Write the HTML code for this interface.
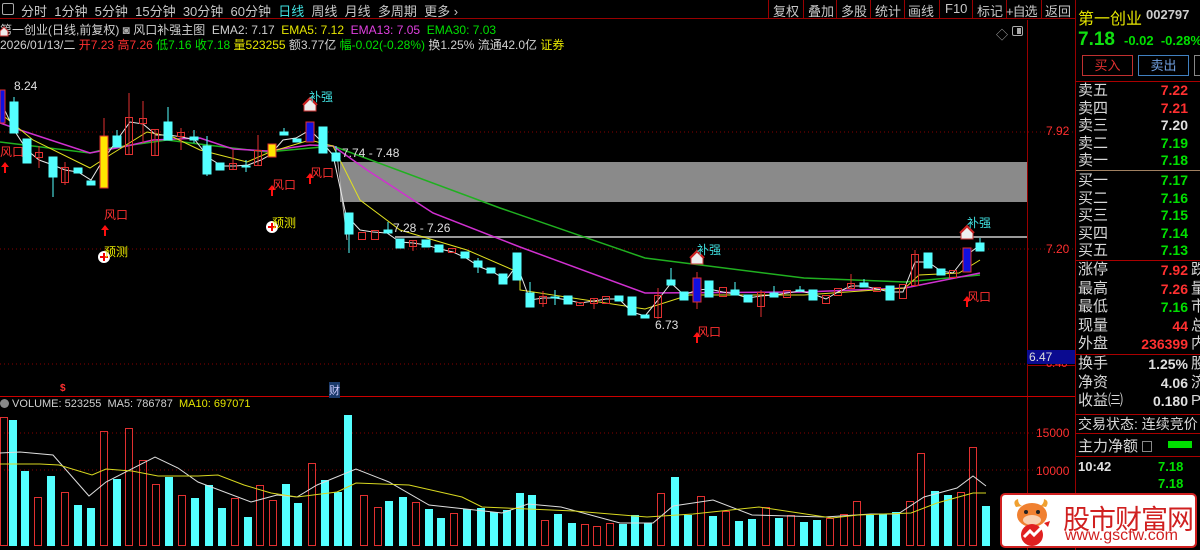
<!DOCTYPE html>
<html><head><meta charset="utf-8">
<style>
*{margin:0;padding:0;box-sizing:border-box}
body{width:1200px;height:550px;background:#000;overflow:hidden;position:relative;font-family:"Liberation Sans","Noto Sans CJK SC",sans-serif;color:#c0c0c0}
.a{position:absolute;white-space:nowrap}
.tb{font-size:13px;color:#c8c8c8;top:1px}
.r{color:#ff3030}.g{color:#00e000}.y{color:#e6e600}.m{color:#e040e0}.w{color:#e0e0e0}.c{color:#40e0e0}
.rp{font-size:15px;color:#d8d8d8}
.v{font-size:14px;font-weight:bold;text-align:right;width:60px}
.sep{position:absolute;top:0;width:1px;height:19px;background:#900}
</style></head><body>
<!-- toolbar -->
<div class="a" style="left:0;top:0;width:1075px;height:19px;border-bottom:1px solid #900"></div>
<div class="a" style="left:2px;top:3px;width:12px;height:12px;border:1px solid #aaa;border-radius:2px"></div>
<div class="a tb" style="left:21px">分时&nbsp;&nbsp;1分钟&nbsp;&nbsp;5分钟&nbsp;&nbsp;15分钟&nbsp;&nbsp;30分钟&nbsp;&nbsp;60分钟&nbsp;&nbsp;<span class="c">日线</span>&nbsp;&nbsp;周线&nbsp;&nbsp;月线&nbsp;&nbsp;多周期&nbsp;&nbsp;更多 ›</div>
<div class="sep" style="left:768px"></div><div class="sep" style="left:803px"></div><div class="sep" style="left:836px"></div><div class="sep" style="left:870px"></div><div class="sep" style="left:904px"></div><div class="sep" style="left:939px"></div><div class="sep" style="left:972px"></div><div class="sep" style="left:1006px"></div><div class="sep" style="left:1041px"></div>
<div class="a tb" style="left:773px">复权</div><div class="a tb" style="left:808px">叠加</div><div class="a tb" style="left:841px">多股</div><div class="a tb" style="left:875px">统计</div><div class="a tb" style="left:908px">画线</div><div class="a tb" style="left:945px">F10</div><div class="a tb" style="left:977px">标记</div><div class="a tb" style="left:1006px;letter-spacing:-1px">+自选</div><div class="a tb" style="left:1045px">返回</div>
<div class="a" style="left:996px;top:26px;color:#aaa;font-size:12px">◇</div>
<div class="a" style="left:1012px;top:26px;width:11px;height:10px;border:1px solid #aaa;border-radius:2px"><div style="position:absolute;right:1px;top:1px;width:4px;height:6px;background:#aaa"></div></div>
<!-- headers -->
<div class="a" style="left:0;top:21px;font-size:12px;color:#d0d0d0">第一创业(日线,前复权) <span style="color:#aaa">◙</span> 风口补强主图&nbsp; EMA2: 7.17&nbsp; <span class="y">EMA5: 7.12</span>&nbsp; <span class="m">EMA13: 7.05</span>&nbsp; <span class="g">EMA30: 7.03</span></div>
<div class="a" style="left:0;top:36px;font-size:12px;color:#d0d0d0">2026/01/13/二 <span class="r">开7.23</span> <span class="r">高7.26</span> <span class="g">低7.16</span> <span class="g">收7.18</span> <span class="y">量523255</span> 额3.77亿 <span class="g">幅-0.02(-0.28%)</span> 换1.25% 流通42.0亿 <span class="y">证券</span></div>
<!-- frame lines -->
<div class="a" style="left:1027px;top:20px;width:1px;height:530px;background:#900"></div>
<div class="a" style="left:1075px;top:0;width:1px;height:550px;background:#900"></div>
<div class="a" style="left:0;top:396px;width:1075px;height:1px;background:#c00"></div>
<div class="a" style="left:1027px;top:365px;width:48px;height:1px;background:#900"></div>
<!-- axis labels -->
<div class="a r" style="left:1046px;top:124px;font-size:12px">7.92</div>
<div class="a r" style="left:1046px;top:242px;font-size:12px">7.20</div>
<div class="a r" style="left:1046px;top:358px;font-size:11px">6.40</div>
<div class="a" style="left:1027px;top:350px;width:48px;height:14px;background:#0a0a90;color:#ddd;font-size:12px;padding-left:2px;line-height:14px">6.47</div>
<div class="a r" style="left:1036px;top:426px;font-size:12px">15000</div>
<div class="a r" style="left:1036px;top:464px;font-size:12px">10000</div>
<div class="a" style="left:0;top:398px;font-size:11px;color:#d0d0d0"><span style="display:inline-block;width:9px;height:9px;border-radius:50%;background:#888;vertical-align:-1px"></span> VOLUME: 523255&nbsp; MA5: 786787&nbsp; <span class="y">MA10: 697071</span></div>
<div class="a r" style="left:60px;top:383px;font-size:10px;font-weight:bold">$</div>
<div class="a" style="left:329px;top:382px;font-size:11px;background:#1a3a6a;color:#ccf">财</div>
<svg class="a" style="left:0;top:0" width="1075" height="550">
<g stroke="#800" stroke-dasharray="1,3" stroke-width="1">
<line x1="0" y1="132" x2="1075" y2="132"/><line x1="0" y1="249" x2="1075" y2="249"/><line x1="0" y1="364" x2="1027" y2="364"/>
<line x1="0" y1="433" x2="1040" y2="433"/><line x1="0" y1="470" x2="1040" y2="470"/>
</g>
<rect x="340" y="162" width="687" height="40" fill="#8a8a8a"/>
<rect x="395" y="236" width="632" height="2" fill="#999"/>
<line x1="337" y1="155" x2="347" y2="240" stroke="#aaa"/>
<polyline fill="none" stroke="#20b020" stroke-width="1.5" points="0,142 90,153 110,148 167,140 207,145 267,152 333,146 500,208 645,258 804,278 905,282 980,275"/>
<polyline fill="none" stroke="#d030d0" stroke-width="1.5" points="0,123 20,130 90,153 127,146 153,140 200,138 233,149 267,151 310,145 333,146 367,170 433,213 520,247 645,293 804,292 905,288 980,273"/>
<polyline fill="none" stroke="#e0e020" stroke-width="1" points="0,113 33,140 90,168 110,155 147,132 173,137 200,150 247,162 270,152 310,140 333,146 360,200 400,230 467,250 520,273 520,290 645,309 689,295 804,295 905,288 919,275 959,273 980,260"/>
<polyline fill="none" stroke="#e8e8e8" stroke-width="1" points="0,100 14,130 27,150 39,160 53,165 65,170 78,172 91,180 100,165 117,140 130,122 143,124 156,135 169,135 182,137 195,140 209,158 222,166 235,166 248,165 261,160 270,155 283,140 296,138 310,130 320,140 333,155 346,215 360,230 373,232 387,233 400,242 413,243 426,245 440,249 453,252 466,258 480,267 493,272 506,280 517,265 530,300 543,298 555,298 568,300 580,303 594,301 606,299 619,299 632,312 645,316 658,300 671,283 684,295 697,290 709,289 723,292 735,294 748,298 761,296 774,295 787,293 800,291 813,294 826,299 838,292 851,286 864,286 877,289 890,292 903,292 915,262 928,262 941,271 953,273 967,255 980,245"/>
<g fill="#54ffff" stroke="#54ffff">
<line x1="14" y1="97" x2="14" y2="133"/><rect x="10" y="102" width="8" height="31"/>
<rect x="23" y="139" width="8" height="24"/>
<line x1="53" y1="157" x2="53" y2="197"/><rect x="49" y="157" width="8" height="20"/>
<rect x="74" y="168" width="8" height="5"/><rect x="87" y="181" width="8" height="4"/>
<line x1="117" y1="130" x2="117" y2="147"/><rect x="113" y="136" width="8" height="11"/>
<line x1="168" y1="107" x2="168" y2="140"/><rect x="164" y="122" width="8" height="18"/>
<line x1="194" y1="130" x2="194" y2="143"/><rect x="190" y="137" width="8" height="3"/>
<line x1="207" y1="136" x2="207" y2="176"/><rect x="203" y="146" width="8" height="28"/>
<rect x="216" y="163" width="8" height="7"/><line x1="246" y1="160" x2="246" y2="172"/><rect x="242" y="166" width="8" height="1"/>
<line x1="284" y1="128" x2="284" y2="135"/><rect x="280" y="132" width="8" height="3"/><rect x="293" y="139" width="8" height="3"/>
<rect x="319" y="127" width="8" height="26"/><line x1="336" y1="146" x2="336" y2="161"/><rect x="332" y="153" width="8" height="8"/>
<line x1="349" y1="213" x2="349" y2="253"/><rect x="345" y="213" width="8" height="21"/>
<line x1="388" y1="222" x2="388" y2="233"/><rect x="384" y="230" width="8" height="3"/>
<rect x="396" y="239" width="8" height="9"/><rect x="422" y="240" width="8" height="7"/><rect x="435" y="245" width="8" height="7"/>
<rect x="461" y="252" width="8" height="6"/><line x1="478" y1="258" x2="478" y2="273"/><rect x="474" y="261" width="8" height="6"/><rect x="487" y="268" width="8" height="5"/>
<rect x="499" y="274" width="8" height="10"/><rect x="513" y="253" width="8" height="27"/>
<line x1="530" y1="282" x2="530" y2="307"/><rect x="526" y="293" width="8" height="14"/>
<line x1="555" y1="290" x2="555" y2="305"/><rect x="551" y="297" width="8" height="1"/><rect x="564" y="296" width="8" height="8"/>
<rect x="615" y="296" width="8" height="5"/><rect x="628" y="297" width="8" height="18"/><rect x="641" y="315" width="8" height="3"/>
<line x1="671" y1="268" x2="671" y2="285"/><rect x="667" y="280" width="8" height="5"/><rect x="680" y="292" width="8" height="8"/>
<rect x="705" y="281" width="8" height="16"/><line x1="735" y1="282" x2="735" y2="295"/><rect x="731" y="290" width="8" height="5"/>
<rect x="744" y="295" width="8" height="7"/><line x1="774" y1="286" x2="774" y2="297"/><rect x="770" y="293" width="8" height="4"/>
<line x1="800" y1="286" x2="800" y2="292"/><rect x="796" y="290" width="8" height="1"/><rect x="809" y="290" width="8" height="10"/>
<line x1="864" y1="279" x2="864" y2="287"/><rect x="860" y="283" width="8" height="4"/><rect x="886" y="286" width="8" height="14"/>
<rect x="924" y="253" width="8" height="15"/><rect x="937" y="269" width="8" height="6"/>
<line x1="980" y1="238" x2="980" y2="251"/><rect x="976" y="243" width="8" height="8"/>
</g>
<g fill="none" stroke="#e03030">
<line x1="39" y1="146" x2="39" y2="168"/><rect x="35.5" y="152.5" width="7" height="5"/>
<line x1="65" y1="162" x2="65" y2="185"/><rect x="61.5" y="167.5" width="7" height="15"/>
<line x1="129" y1="93" x2="129" y2="155"/><rect x="125.5" y="117.5" width="7" height="37"/>
<line x1="143" y1="101" x2="143" y2="143"/><rect x="139.5" y="118.5" width="7" height="5"/>
<line x1="155" y1="129" x2="155" y2="156"/><rect x="151.5" y="129.5" width="7" height="26"/>
<line x1="181" y1="128" x2="181" y2="150"/><rect x="177.5" y="132.5" width="7" height="4"/>
<line x1="233" y1="150" x2="233" y2="170"/><rect x="229.5" y="163.5" width="7" height="6"/>
<line x1="258" y1="135" x2="258" y2="165"/><rect x="254.5" y="150.5" width="7" height="15"/>
<rect x="358.5" y="232.5" width="7" height="7"/><rect x="371.5" y="230.5" width="7" height="9"/>
<line x1="413" y1="240" x2="413" y2="251"/><rect x="409.5" y="240.5" width="7" height="6"/>
<rect x="448.5" y="248.5" width="7" height="4"/>
<line x1="543" y1="291" x2="543" y2="307"/><rect x="539.5" y="296.5" width="7" height="7"/>
<rect x="576.5" y="302.5" width="7" height="3"/><line x1="594" y1="298" x2="594" y2="309"/><rect x="590.5" y="298.5" width="7" height="5"/>
<rect x="602.5" y="296.5" width="7" height="7"/>
<line x1="658" y1="288" x2="658" y2="319"/><rect x="654.5" y="295.5" width="7" height="22"/>
<rect x="719.5" y="287.5" width="7" height="9"/><line x1="761" y1="290" x2="761" y2="317"/><rect x="757.5" y="292.5" width="7" height="14"/>
<rect x="783.5" y="290.5" width="7" height="7"/><rect x="822.5" y="295.5" width="7" height="8"/><rect x="834.5" y="288.5" width="7" height="7"/>
<line x1="851" y1="274" x2="851" y2="288"/><rect x="847.5" y="283.5" width="7" height="5"/><rect x="873.5" y="287.5" width="7" height="4"/>
<rect x="899.5" y="284.5" width="7" height="14"/><line x1="915" y1="250" x2="915" y2="285"/><rect x="911.5" y="254.5" width="7" height="31"/>
<rect x="949.5" y="270.5" width="7" height="7"/>
</g>
<rect x="100" y="136" width="8" height="52" fill="#ffe600" stroke="#e03030"/><line x1="104" y1="118" x2="104" y2="136" stroke="#e03030"/>
<rect x="268" y="144" width="8" height="13" fill="#ffe600" stroke="#e03030"/>
<rect x="0" y="90" width="5" height="33" fill="#1010e0" stroke="#e03030"/>
<rect x="306" y="122" width="8" height="20" fill="#1010e0" stroke="#e03030"/>
<line x1="697" y1="272" x2="697" y2="309" stroke="#e03030"/><rect x="693" y="278" width="8" height="24" fill="#1010e0" stroke="#e03030"/>
<rect x="963" y="248" width="8" height="24" fill="#1010e0" stroke="#e03030"/>
<g fill="#ff1010">
<path d="M5 162 l-4 5 h3 v6 h2 v-6 h3z"/><path d="M105 225 l-4 5 h3 v6 h2 v-6 h3z"/>
<path d="M272 185 l-4 5 h3 v6 h2 v-6 h3z"/><path d="M310 173 l-4 5 h3 v6 h2 v-6 h3z"/>
<path d="M697 332 l-4 5 h3 v6 h2 v-6 h3z"/><path d="M967 296 l-4 5 h3 v6 h2 v-6 h3z"/>
</g>
<g><circle cx="104" cy="257" r="6" fill="#fff"/><path d="M104 253v8M100 257h8" stroke="#e00" stroke-width="2"/>
<circle cx="272" cy="227" r="6" fill="#fff"/><path d="M272 223v8M268 227h8" stroke="#e00" stroke-width="2"/></g>
<g><path d="M304 105 l6-6 6 6 v6 h-12z" fill="#eee" stroke="#c33"/><path d="M303 105 l7-7 7 7" fill="none" stroke="#c22" stroke-width="2"/>
<path d="M691 258 l6-6 6 6 v6 h-12z" fill="#eee" stroke="#c33"/><path d="M690 258 l7-7 7 7" fill="none" stroke="#c22" stroke-width="2"/>
<path d="M961 233 l6-6 6 6 v6 h-12z" fill="#eee" stroke="#c33"/><path d="M960 233 l7-7 7 7" fill="none" stroke="#c22" stroke-width="2"/>
<path d="M0 31 l4-4 4 4 v5 h-8z" fill="#eee" stroke="#c33"/></g>
<g fill="#54ffff">
<rect x="9" y="420" width="8" height="126"/><rect x="21" y="471" width="8" height="75"/><rect x="47" y="476" width="8" height="70"/><rect x="74" y="505" width="8" height="41"/><rect x="87" y="508" width="8" height="38"/><rect x="113" y="479" width="8" height="67"/><rect x="165" y="477" width="8" height="69"/><rect x="191" y="498" width="8" height="48"/><rect x="205" y="485" width="8" height="61"/><rect x="218" y="508" width="8" height="38"/><rect x="244" y="517" width="8" height="29"/><rect x="282" y="484" width="8" height="62"/><rect x="294" y="503" width="8" height="43"/><rect x="321" y="480" width="8" height="66"/><rect x="334" y="492" width="8" height="54"/><rect x="344" y="415" width="8" height="131"/><rect x="385" y="501" width="8" height="45"/><rect x="399" y="497" width="8" height="49"/><rect x="425" y="509" width="8" height="37"/><rect x="437" y="518" width="8" height="28"/><rect x="463" y="509" width="8" height="37"/><rect x="477" y="508" width="8" height="38"/><rect x="490" y="512" width="8" height="34"/><rect x="503" y="510" width="8" height="36"/><rect x="516" y="493" width="8" height="53"/><rect x="528" y="495" width="8" height="51"/><rect x="554" y="514" width="8" height="32"/><rect x="568" y="523" width="8" height="23"/><rect x="619" y="524" width="8" height="22"/><rect x="631" y="515" width="8" height="31"/><rect x="644" y="523" width="8" height="23"/><rect x="671" y="477" width="8" height="69"/><rect x="684" y="515" width="8" height="31"/><rect x="709" y="516" width="8" height="30"/><rect x="735" y="521" width="8" height="25"/><rect x="748" y="519" width="8" height="27"/><rect x="775" y="518" width="8" height="28"/><rect x="800" y="522" width="8" height="24"/><rect x="813" y="520" width="8" height="26"/><rect x="866" y="515" width="8" height="31"/><rect x="879" y="514" width="8" height="32"/><rect x="892" y="512" width="8" height="34"/><rect x="931" y="491" width="8" height="55"/><rect x="944" y="495" width="8" height="51"/><rect x="982" y="506" width="8" height="40"/>
</g>
<g fill="none" stroke="#e03030">
<rect x="0.5" y="417.5" width="7" height="128"/><rect x="34.5" y="497.5" width="7" height="48"/><rect x="61.5" y="492.5" width="7" height="53"/><rect x="100.5" y="431.5" width="7" height="114"/><rect x="125.5" y="428.5" width="7" height="117"/><rect x="139.5" y="460.5" width="7" height="85"/><rect x="152.5" y="484.5" width="7" height="61"/><rect x="178.5" y="495.5" width="7" height="50"/><rect x="231.5" y="498.5" width="7" height="47"/><rect x="256.5" y="485.5" width="7" height="60"/><rect x="269.5" y="500.5" width="7" height="45"/><rect x="308.5" y="463.5" width="7" height="82"/><rect x="360.5" y="495.5" width="7" height="50"/><rect x="374.5" y="507.5" width="7" height="38"/><rect x="412.5" y="502.5" width="7" height="43"/><rect x="450.5" y="513.5" width="7" height="32"/><rect x="541.5" y="520.5" width="7" height="25"/><rect x="581.5" y="524.5" width="7" height="21"/><rect x="593.5" y="526.5" width="7" height="19"/><rect x="606.5" y="523.5" width="7" height="22"/><rect x="657.5" y="493.5" width="7" height="52"/><rect x="697.5" y="496.5" width="7" height="49"/><rect x="722.5" y="511.5" width="7" height="34"/><rect x="762.5" y="507.5" width="7" height="38"/><rect x="787.5" y="515.5" width="7" height="30"/><rect x="826.5" y="518.5" width="7" height="27"/><rect x="840.5" y="514.5" width="7" height="31"/><rect x="853.5" y="501.5" width="7" height="44"/><rect x="906.5" y="501.5" width="7" height="44"/><rect x="917.5" y="453.5" width="7" height="92"/><rect x="957.5" y="492.5" width="7" height="53"/><rect x="969.5" y="447.5" width="7" height="98"/>
</g>
<polyline fill="none" stroke="#ddd" points="0,453 20,452 53,455 89,496 106,482 155,457 178,468 198,482 251,502 277,495 297,497 317,485 356,469 389,482 429,505 502,513 528,504 561,507 620,523 653,523 673,506 713,500 752,515 825,517 871,514 898,514 924,497 957,488 973,476 986,486"/>
<polyline fill="none" stroke="#d8d820" points="0,464 40,464 59,465 92,475 106,469 132,471 158,476 198,476 218,475 244,485 271,493 297,497 337,492 356,483 409,485 462,497 482,507 574,511 647,517 693,514 759,507 799,513 832,518 858,515 911,513 937,503 973,493 986,493"/>
</svg>
<div class="a w" style="left:14px;top:79px;font-size:12px">8.24</div>
<div class="a w" style="left:655px;top:318px;font-size:12px">6.73</div>
<div class="a w" style="left:342px;top:146px;font-size:12px">7.74 - 7.48</div>
<div class="a w" style="left:393px;top:221px;font-size:12px">7.28 - 7.26</div>
<div class="a r" style="left:0;top:143px;font-size:12px">风口</div>
<div class="a r" style="left:104px;top:206px;font-size:12px">风口</div>
<div class="a y" style="left:104px;top:243px;font-size:12px">预测</div>
<div class="a r" style="left:272px;top:176px;font-size:12px">风口</div>
<div class="a y" style="left:272px;top:214px;font-size:12px">预测</div>
<div class="a r" style="left:310px;top:164px;font-size:12px">风口</div>
<div class="a c" style="left:309px;top:88px;font-size:12px">补强</div>
<div class="a c" style="left:697px;top:241px;font-size:12px">补强</div>
<div class="a r" style="left:697px;top:323px;font-size:12px">风口</div>
<div class="a c" style="left:967px;top:214px;font-size:12px">补强</div>
<div class="a r" style="left:967px;top:288px;font-size:12px">风口</div>
<!-- right panel -->
<div class="a" style="left:1078px;top:5px;font-size:16px;color:#e6e600">第一创业</div>
<div class="a" style="left:1146px;top:7px;font-size:13px;font-weight:bold;color:#ccc">002797</div>
<div class="a" style="left:1078px;top:29px;font-size:19px;font-weight:bold;color:#10e010">7.18</div>
<div class="a g" style="left:1124px;top:33px;font-size:13px;font-weight:bold">-0.02&nbsp; -0.28%</div>
<div class="a" style="left:1082px;top:55px;width:51px;height:21px;border:1px solid #c03030;color:#e03030;font-size:13px;text-align:center;line-height:19px">买入</div>
<div class="a" style="left:1138px;top:55px;width:51px;height:21px;border:1px solid #4080c0;color:#70a0e0;font-size:13px;text-align:center;line-height:19px">卖出</div>
<div class="a" style="left:1194px;top:55px;width:10px;height:21px;border:1px solid #888"></div>
<div class="a" style="left:1076px;top:81px;width:124px;height:1px;background:#a00"></div>
<div class="a" style="left:1076px;top:170px;width:124px;height:1px;background:#a08060"></div>
<div class="a" style="left:1076px;top:260px;width:124px;height:1px;background:#a00"></div>
<div class="a" style="left:1076px;top:354px;width:124px;height:1px;background:#a00"></div>
<div class="a" style="left:1076px;top:414px;width:124px;height:1px;background:#a00"></div>
<div class="a" style="left:1076px;top:433px;width:124px;height:1px;background:#a00"></div>
<div class="a" style="left:1076px;top:456px;width:124px;height:1px;background:#a00"></div>
<div class="a rp" style="left:1078px;top:82px;line-height:17.5px">卖五<br>卖四<br>卖三<br>卖二<br>卖一</div>
<div class="a v" style="left:1128px;top:82px;line-height:17.5px"><span class="r">7.22</span><br><span class="r">7.21</span><br><span class="w">7.20</span><br><span class="g">7.19</span><br><span class="g">7.18</span></div>
<div class="a rp" style="left:1078px;top:172px;line-height:17.5px">买一<br>买二<br>买三<br>买四<br>买五</div>
<div class="a v g" style="left:1128px;top:172px;line-height:17.5px">7.17<br>7.16<br>7.15<br>7.14<br>7.13</div>
<div class="a rp" style="left:1078px;top:261px;line-height:18.6px">涨停<br>最高<br>最低<br>现量<br>外盘</div>
<div class="a v" style="left:1128px;top:261px;line-height:18.6px"><span class="r">7.92</span><br><span class="r">7.26</span><br><span class="g">7.16</span><br><span class="r">44</span><br><span class="r">236399</span></div>
<div class="a rp" style="left:1191px;top:261px;line-height:18.6px">跌<br>量<br>市<br>总<br>内</div>
<div class="a rp" style="left:1078px;top:355px;line-height:18.6px">换手<br>净资<br>收益㈢</div>
<div class="a v w" style="left:1128px;top:355px;line-height:18.6px">1.25%<br>4.06<br>0.180</div>
<div class="a rp" style="left:1191px;top:355px;line-height:18.6px">股<br>济<br>P</div>
<div class="a rp" style="left:1078px;top:414px;font-size:14px">交易状态: 连续竞价</div>
<div class="a rp" style="left:1078px;top:435px;font-size:15px">主力净额 <span style="display:inline-block;width:10px;height:11px;border:1px solid #888;vertical-align:-1px"></span></div>
<div class="a" style="left:1168px;top:441px;width:24px;height:7px;background:#00e000"></div>
<div class="a w" style="left:1078px;top:459px;font-size:13px;font-weight:bold">10:42</div>
<div class="a g" style="left:1158px;top:459px;font-size:13px;font-weight:bold">7.18</div>
<div class="a g" style="left:1158px;top:476px;font-size:13px;font-weight:bold">7.18</div>
<!-- logo -->
<div class="a" style="left:1000px;top:493px;width:197px;height:55px;background:#fff;border:2px solid #d02020;border-radius:5px"></div>
<svg class="a" style="left:1008px;top:497px" width="50" height="50">
<path d="M8 10 q-4-6 2-8 q0 5 4 7z M38 10 q4-6-2-8 q0 5-4 7z" fill="#f0a030"/>
<ellipse cx="24" cy="18" rx="15" ry="12" fill="#f08030"/>
<ellipse cx="24" cy="23" rx="9" ry="5" fill="#f8d0b0"/>
<circle cx="18" cy="15" r="2" fill="#222"/><circle cx="30" cy="15" r="2" fill="#222"/>
<circle cx="24" cy="38" r="11" fill="#e02020"/>
<path d="M16 40 l6-6 4 4 10-10" stroke="#fff" stroke-width="3" fill="none"/>
<path d="M36 26 l6-2-2 6z" fill="#e02020"/>
</svg>
<div class="a" style="left:1063px;top:498px;font-size:27px;color:#d02020;letter-spacing:-1px">股市财富网</div>
<div class="a" style="left:1065px;top:527px;font-size:16px;color:#d02020">www.gscfw.com</div>
</body></html>
